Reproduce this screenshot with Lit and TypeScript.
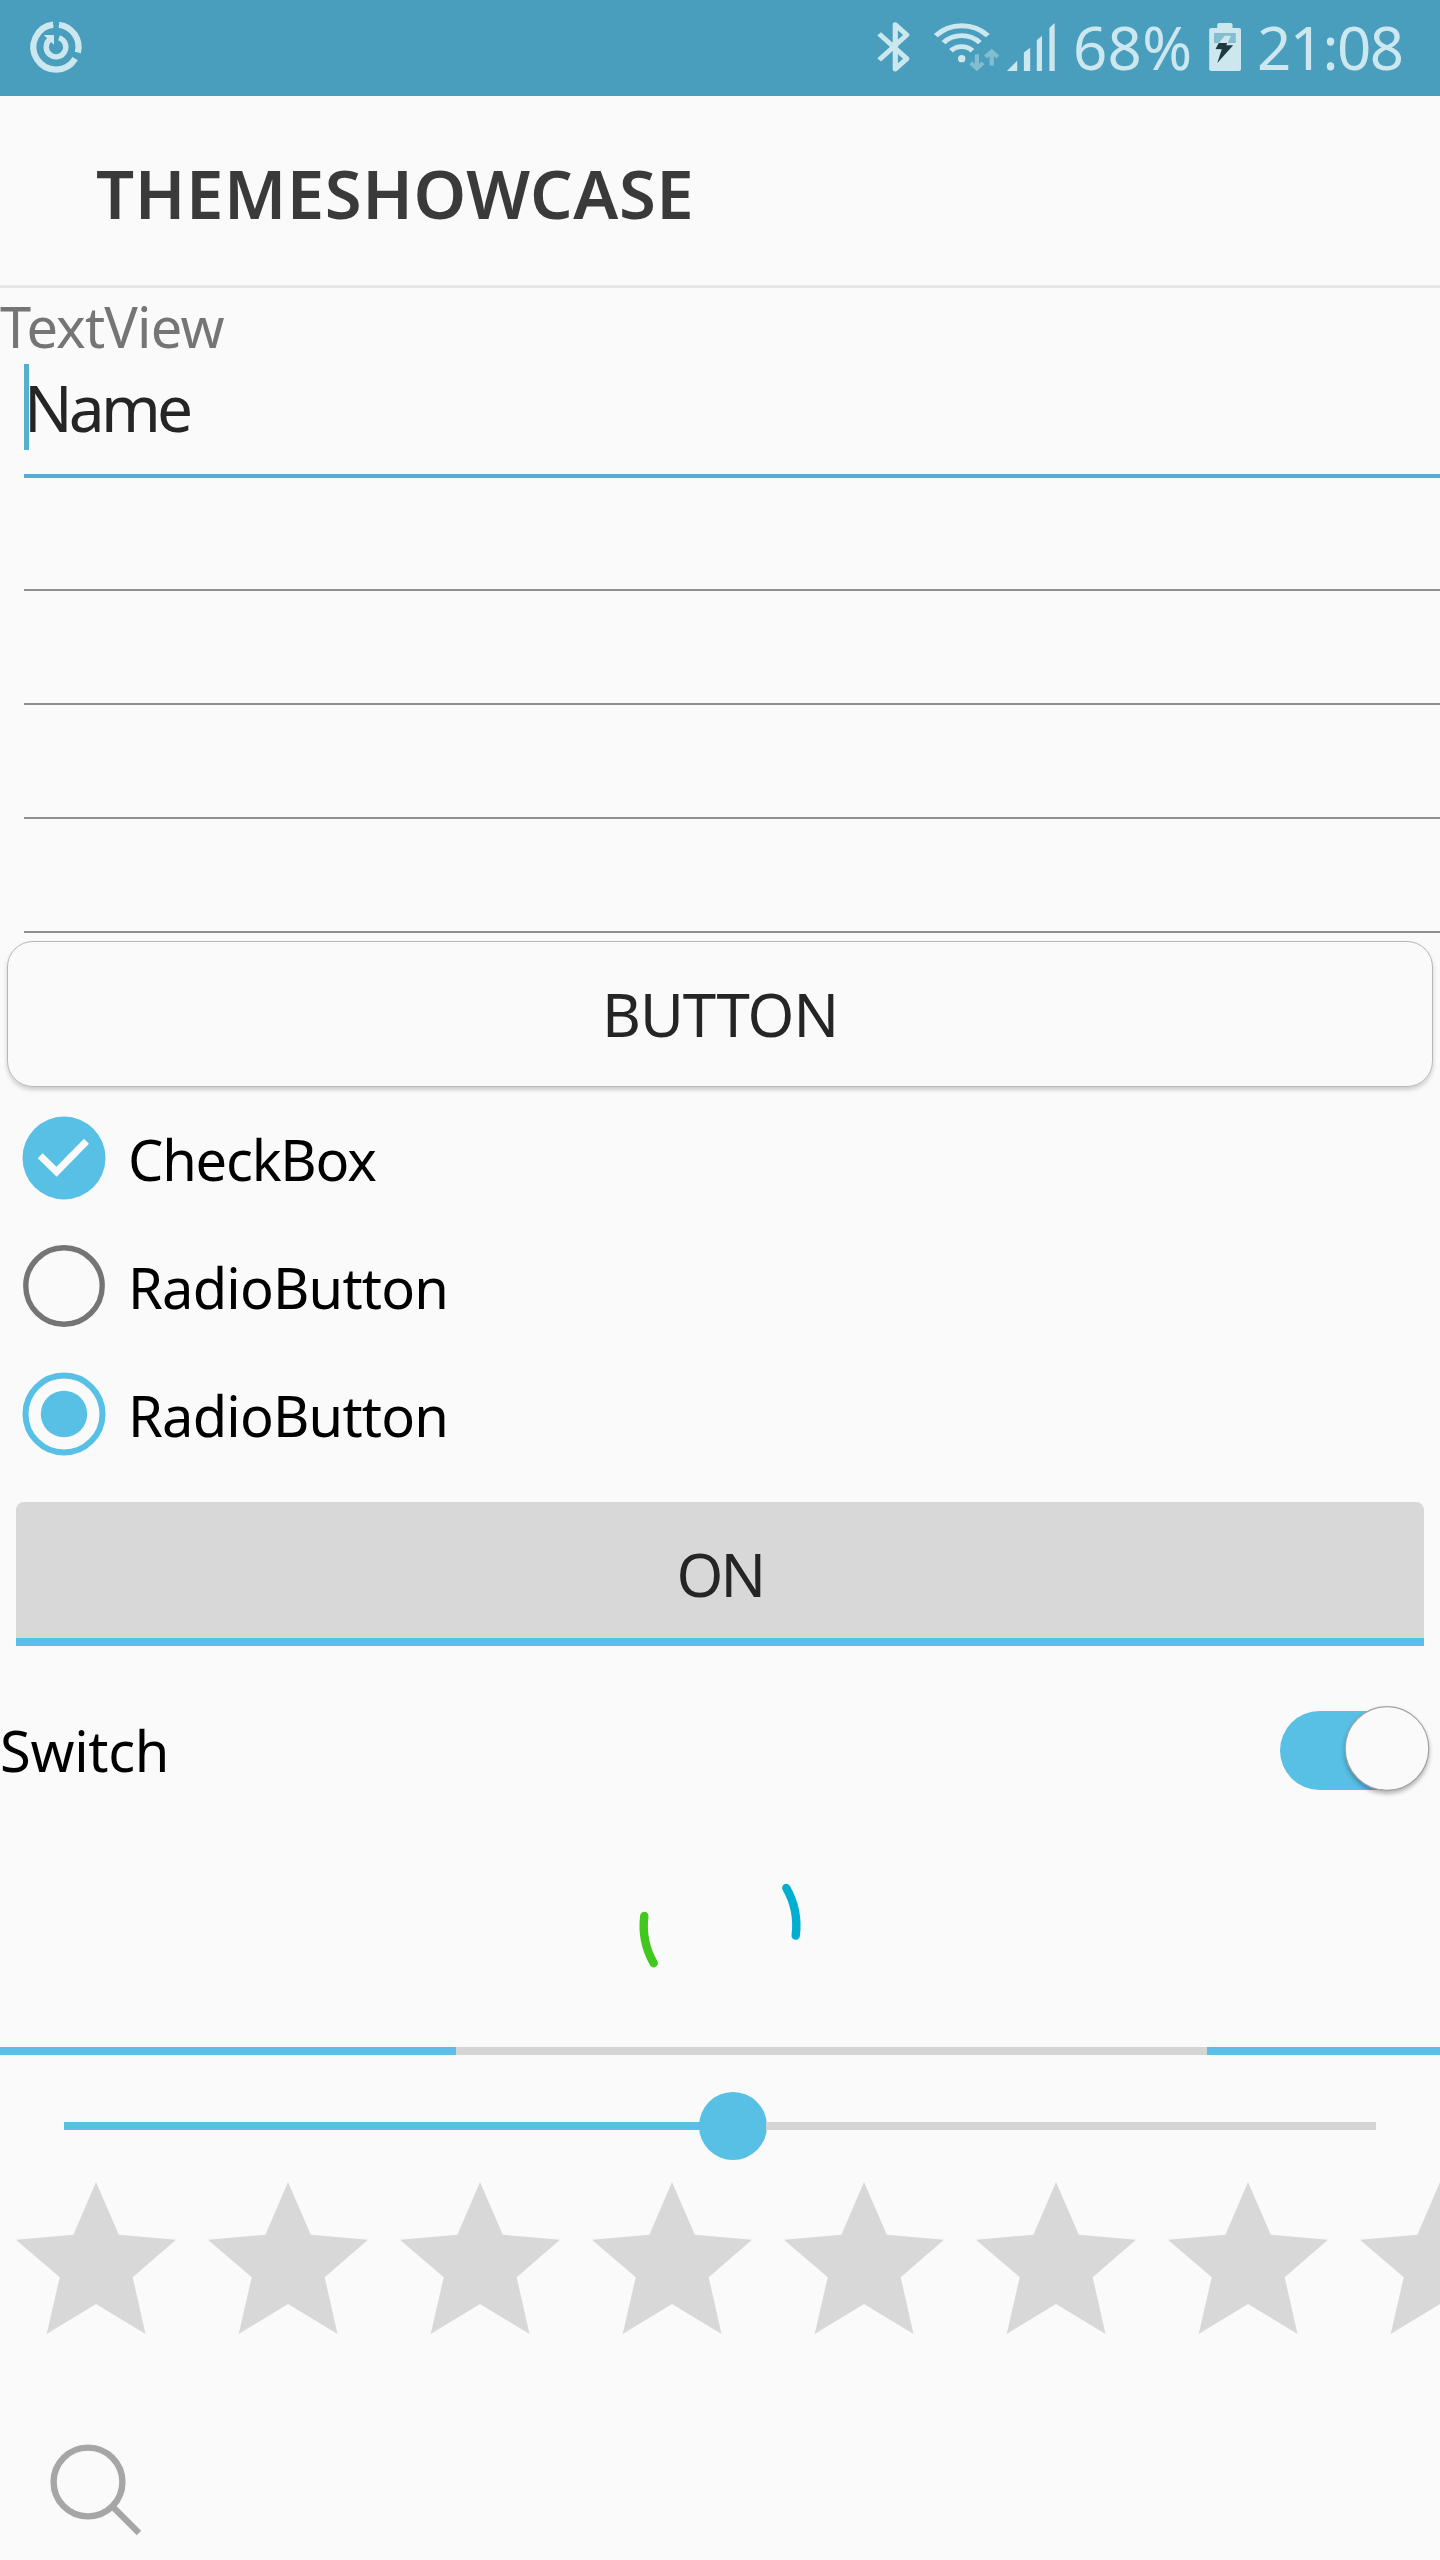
import { LitElement, html, css, svg } from "lit";
import { customElement, property } from "lit/decorators.js";

@customElement("status-bar")
class StatusBar extends LitElement {
  static styles = css`
    :host {
      display: flex;
      height: 96px;
      background: #4a9ebd;
      color: #cde7ef;
      justify-content: space-between;
    }
    svg {
      display: block;
      flex: none;
    }
    .right {
      display: flex;
      height: 96px;
      padding-right: 34px;
    }
    .percent,
    .clock {
      font-size: 60px;
      line-height: 94px;
      height: 96px;
      white-space: nowrap;
    }
    .percent {
      width: 128px;
      margin-left: 3px;
      letter-spacing: 0.3px;
    }
    .clock {
      width: 149px;
      letter-spacing: -1.6px;
    }
  `;

  render() {
    return html`
      <svg width="120" height="96" viewBox="0 0 120 96" fill="none" stroke="currentColor">
        <path d="M59 24.7A22.5 22.5 0 0 1 77.9 52.4M75.2 58.6A22.5 22.5 0 1 1 53.2 24.7" stroke-width="6.2" />
        <path d="M59 37.7A9.8 9.8 0 1 1 49.6 39.6" stroke-width="5.4" />
        <path d="M43.8 34.9H54V44.8Z" fill="currentColor" stroke="none" />
      </svg>
      <div class="right">
        <svg width="200" height="96" viewBox="870 0 200 96" fill="none" stroke="currentColor">
          <g transform="scale(1 0.9011)">
            <path
              d="M879.2 37.6L906.8 65.2L895.3 76.6V27.4L906.8 38.8L879.2 66.4"
              stroke-width="5.2"
              stroke-linejoin="round"
            />
            <g stroke-width="5.3">
              <path d="M935.8 39.6A36.2 36.2 0 0 1 987.8 39.6" />
              <path d="M943.5 47.4A25 25 0 0 1 979.9 47.4" />
              <path d="M951 56.3A15 15 0 0 1 972.4 56.3" />
            </g>
            <ellipse cx="961.7" cy="65.1" rx="3.7" ry="4" fill="currentColor" stroke="none" />
            <g stroke="#83bdd0" stroke-width="4.2">
              <path d="M976.9 60.3V76M970.8 69.8L976.9 76L983 69.8" />
              <path d="M991.7 72.8V57M985.6 63.2L991.7 57L997.8 63.2" />
            </g>
            <g fill="currentColor" stroke="none">
              <path d="M1006.9 78.8H1017.2V67.3Z" />
              <path d="M1023.9 78.8V58.4L1030.2 52.9V78.8Z" />
              <path d="M1036.8 78.8V44.8L1042 39.6V78.8Z" />
              <path d="M1049.4 78.8V31L1054.7 25.5V78.8Z" />
            </g>
          </g>
        </svg>
        <div class="percent">68%</div>
        <svg width="56" height="96" viewBox="1201 0 56 96">
          <g transform="scale(1 0.9011)">
            <path
              d="M1217.3 31V27.3Q1217.3 25.5 1219 25.5H1230.8Q1232.5 25.5 1232.5 27.3V31H1239Q1241 31 1241 33V76.8Q1241 78.8 1239 78.8H1211.2Q1209.2 78.8 1209.2 76.8V33Q1209.2 31 1211.2 31Z"
              fill="currentColor"
            />
            <rect x="1214" y="36.6" width="21.8" height="11.1" fill="#84bcd0" />
            <path d="M1224.7 39.6H1231L1227.7 47.7H1218.8Z" fill="currentColor" />
            <path
              d="M1218.8 47.7H1227.3L1226.2 50.3H1233.2L1217.3 69.9L1221.8 54.7L1215.5 54.4Z"
              fill="#203840"
            />
          </g>
        </svg>
        <div class="clock">21:08</div>
      </div>
    `;
  }
}

@customElement("choice-row")
class ChoiceRow extends LitElement {
  @property() kind = "radio";
  @property() label = "";
  @property({ type: Boolean }) checked = false;

  static styles = css`
    :host {
      display: flex;
      height: 128px;
      font-size: 56px;
      line-height: 130px;
      color: #000;
    }
    svg {
      display: block;
      width: 128px;
      height: 128px;
      flex: none;
    }
    .checkbox {
      letter-spacing: -1.2px;
    }
    .radio {
      letter-spacing: -0.8px;
    }
  `;

  private mark() {
    if (this.kind === "checkbox") {
      return svg`
        <circle cx="64" cy="64" r="41.5" fill="#57c0e4" />
        <path d="M37.7 64.3L42.7 59.3L56.4 72.7L84 44.7L89 49.7L56.7 82.7Z" fill="#fafafa" />`;
    }
    return this.checked
      ? svg`
        <circle cx="64" cy="64" r="38.5" fill="none" stroke="#57c0e4" stroke-width="6" />
        <circle cx="64" cy="64" r="23.2" fill="#57c0e4" />`
      : svg`<circle cx="64" cy="64" r="38.2" fill="none" stroke="#757575" stroke-width="5.4" />`;
  }

  render() {
    return html`
      <svg viewBox="0 0 128 128">${this.mark()}</svg>
      <span class=${this.kind}>${this.label}</span>
    `;
  }
}

@customElement("app-root")
class AppRoot extends LitElement {
  static styles = css`
    :host {
      display: block;
      height: 2560px;
      overflow: hidden;
      background: #fafafa;
      font-family: "Noto Sans", "Open Sans", sans-serif;
    }
    svg {
      display: block;
      flex: none;
    }
    .app-bar {
      box-sizing: border-box;
      height: 192px;
      padding-left: 96px;
      border-bottom: 3px solid #e7e7e7;
      font-size: 67px;
      font-weight: 600;
      line-height: 194px;
      letter-spacing: 0.6px;
      color: #3a3a3a;
      white-space: nowrap;
    }
    .text-view {
      height: 76px;
      font-size: 56px;
      line-height: 77px;
      letter-spacing: -0.8px;
      color: #757575;
    }
    .field {
      box-sizing: border-box;
      height: 114px;
      margin-left: 24px;
      border-bottom: 2px solid #8f8f8f;
    }
    .field.focused {
      height: 114px;
      border-bottom: 4px solid #56afd1;
    }
    .field.short {
      height: 113px;
    }
    .value {
      display: flex;
      height: 86px;
      font-size: 64px;
      line-height: 88px;
      letter-spacing: -3.8px;
      color: #252525;
    }
    .cursor {
      width: 5px;
      height: 86px;
      margin-right: -5px;
      background: #56afd1;
    }
    .button {
      box-sizing: border-box;
      height: 146px;
      margin: 8px 7px 7px;
      border: 1.5px solid #b8b8b8;
      border-radius: 26px;
      box-shadow: 0 3px 4px rgba(0, 0, 0, 0.18);
      text-align: center;
      font-size: 60px;
      line-height: 145px;
      letter-spacing: -1px;
      color: #252525;
    }
    .toggle {
      box-sizing: border-box;
      height: 144px;
      margin: 24px 16px 0;
      border-bottom: 8px solid #57c0e4;
      border-radius: 8px 8px 0 0;
      background: #d8d8d8;
      text-align: center;
      font-size: 60px;
      line-height: 145px;
      letter-spacing: -2.8px;
      color: #252525;
    }
    .switch-row {
      display: flex;
      justify-content: space-between;
      height: 208px;
      line-height: 209px;
      font-size: 56px;
      letter-spacing: -0.3px;
      color: #000;
    }
    .thumb {
      filter: drop-shadow(0 3px 2px rgba(0, 0, 0, 0.28));
    }
    .spinner {
      display: flex;
      justify-content: center;
      height: 193px;
    }
    .progress {
      display: grid;
      grid-template-columns: 456px 751px 1fr;
      height: 8px;
    }
    .filled {
      background: #57c0e4;
    }
    .rest {
      background: #d4d4d4;
    }
    .seek {
      display: flex;
      align-items: center;
      height: 80px;
      margin: 31px 64px 0;
    }
    .seek .filled,
    .seek .rest {
      height: 8px;
    }
    .seek .filled {
      width: 636px;
    }
    .seek .rest {
      flex: 1;
    }
    .knob {
      width: 68px;
      height: 68px;
      margin: 0 -1px;
      border-radius: 50%;
      background: #57c0e4;
    }
    .rating {
      display: flex;
      height: 192px;
      overflow: hidden;
    }
  `;

  render() {
    return html`
      <status-bar></status-bar>
      <div class="app-bar">THEMESHOWCASE</div>
      <div class="text-view">TextView</div>
      <div class="field focused">
        <div class="value"><span class="cursor"></span><span>Name</span></div>
      </div>
      <div class="field short"></div>
      <div class="field"></div>
      <div class="field"></div>
      <div class="field"></div>
      <div class="button">BUTTON</div>
      <choice-row kind="checkbox" label="CheckBox" checked></choice-row>
      <choice-row kind="radio" label="RadioButton"></choice-row>
      <choice-row kind="radio" label="RadioButton" checked></choice-row>
      <div class="toggle">ON</div>
      <div class="switch-row">
        <span>Switch</span>
        <svg width="180" height="208" viewBox="1260 1646 180 208">
          <rect x="1280" y="1711" width="140" height="79" rx="39.5" fill="#57c0e4" />
          <circle class="thumb" cx="1387" cy="1748.5" r="41.8" fill="#fafafa" stroke="#a2a2a2" stroke-width="1.2" />
        </svg>
      </div>
      <div class="spinner">
        <svg width="200" height="193" viewBox="620 1854 200 193" fill="none" stroke-width="8.4" stroke-linecap="round">
          <path d="M644.3 1916A76.3 76.3 0 0 0 653.7 1963.2" stroke="#41c71e" />
          <path d="M786.3 1888A76.3 76.3 0 0 1 795.7 1935.6" stroke="#00aecf" />
        </svg>
      </div>
      <div class="progress">
        <div class="filled"></div>
        <div class="rest"></div>
        <div class="filled"></div>
      </div>
      <div class="seek">
        <div class="filled"></div>
        <div class="knob"></div>
        <div class="rest"></div>
      </div>
      <div class="rating">
        ${Array.from(
          { length: 8 },
          () => html`
            <svg width="192" height="192" viewBox="0 6 192 192" fill="#d8d8d8">
              <path
                d="M96 22L118.8 74.7L176 79.7L132.7 117.3L145.5 174L96 144L46.7 174L59.7 117.3L16 79.7L73.4 74.7Z"
              />
            </svg>
          `
        )}
      </div>
      <svg width="192" height="202" viewBox="0 2358 192 202" fill="none" stroke="#a6a6a6">
        <circle cx="88" cy="2482" r="34.4" stroke-width="6.4" />
        <path d="M112.5 2506.5L139 2533" stroke-width="6.2" />
      </svg>
    `;
  }
}
